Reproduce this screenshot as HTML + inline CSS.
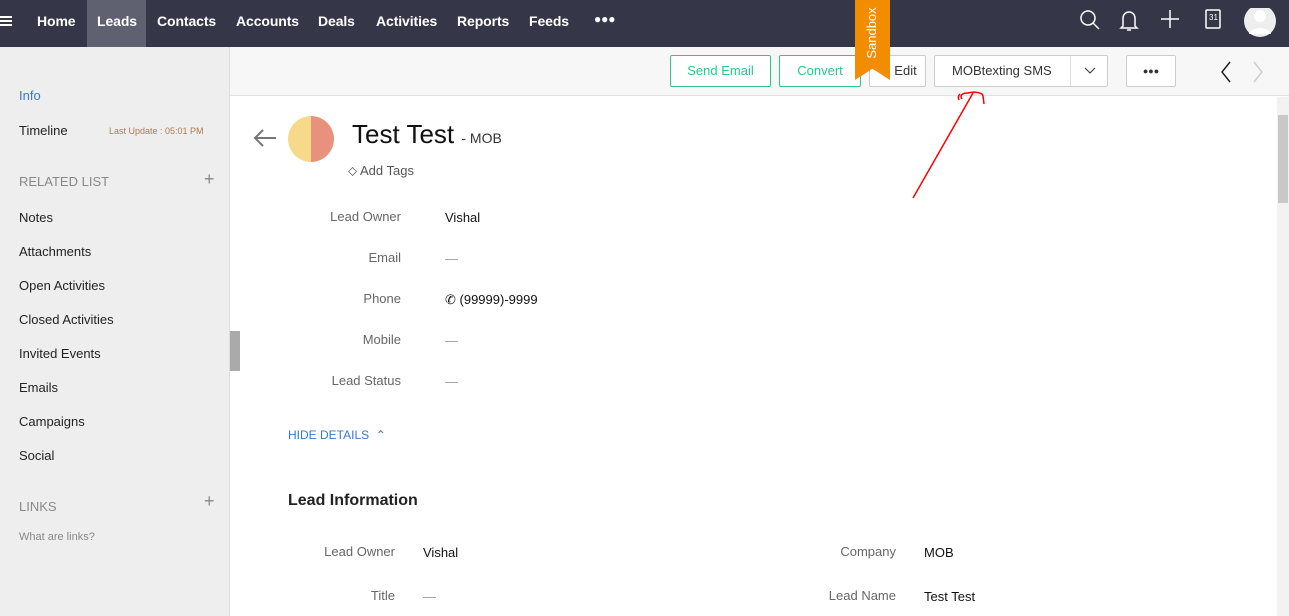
<!DOCTYPE html>
<html><head><meta charset="utf-8"><style>
*{box-sizing:border-box;margin:0;padding:0}
body{width:1289px;height:616px;overflow:hidden;font-family:"Liberation Sans",sans-serif;background:#fff;position:relative}
.top{position:absolute;left:0;top:0;width:1289px;height:47px;background:#363649}
.top a{position:absolute;top:0;height:47px;line-height:43px;color:#fff;font-size:14px;font-weight:bold;letter-spacing:-0.1px}
.side{position:absolute;left:0;top:47px;width:230px;height:569px;background:#eeeeee;border-right:1px solid #ddd}
.side div{position:absolute;left:19px;font-size:13px;color:#222}
.bar{position:absolute;left:230px;top:47px;width:1059px;height:49px;background:#f7f7f7;border-bottom:1px solid #e3e3e3}
.btn{position:absolute;top:55px;height:32px;border:1px solid #ccc;background:#fff;font-size:13px;color:#333;text-align:center;line-height:30px;border-radius:2px}
.g{border-color:#2fc58a;color:#2fc58a}
.lbl{position:absolute;font-size:13px;color:#666;text-align:right}
.val{position:absolute;font-size:13px;color:#111}
</style></head><body>
<div class="top">
<div style="position:absolute;left:0;top:16px;width:12px;height:2px;background:#fff;box-shadow:0 4px 0 #fff,0 8px 0 #fff"></div>
<a style="left:37px">Home</a>
<div style="position:absolute;left:87px;top:0;width:59px;height:47px;background:#5f6070"></div>
<a style="left:97px">Leads</a><a style="left:157px">Contacts</a><a style="left:236px">Accounts</a><a style="left:318px">Deals</a><a style="left:376px">Activities</a><a style="left:457px">Reports</a><a style="left:529px">Feeds</a><a style="left:594px;font-size:12px;line-height:38px">●●●</a>
<svg style="position:absolute;left:1078px;top:8px" width="200" height="32" fill="none" stroke="#fff" stroke-width="1.5">
<circle cx="10" cy="10" r="7"/><path d="M15 15l6 6"/>
<path d="M45 18V10a6 6 0 0112 0v8l2 2H43z M49 22h4"/>
<path d="M92 2v18M83 11h18"/>
<rect x="128" y="2" width="14" height="18" rx="1"/>
<circle cx="182" cy="13" r="16" fill="#eee" stroke="none"/><circle cx="182" cy="8" r="6" fill="#fff" stroke="none"/><path d="M171 26c2-8 20-8 22 0" fill="#fff" stroke="none"/>
</svg>
<span style="position:absolute;left:1209px;top:13px;color:#fff;font-size:8px">31</span>
</div>
<div class="side">
<div style="top:41px;color:#3b76d2">Info</div>
<div style="top:76px">Timeline</div><div style="left:109px;top:79px;font-size:9px;color:#b07a4a">Last Update : 05:01 PM</div>
<div style="top:127px;color:#888">RELATED LIST</div><div style="left:204px;top:122px;font-size:18px;color:#888">+</div>
<div style="top:163px">Notes</div><div style="top:197px">Attachments</div><div style="top:231px">Open Activities</div><div style="top:265px">Closed Activities</div><div style="top:299px">Invited Events</div><div style="top:333px">Emails</div><div style="top:367px">Campaigns</div><div style="top:401px">Social</div>
<div style="top:452px;color:#888">LINKS</div><div style="left:204px;top:444px;font-size:18px;color:#888">+</div>
<div style="top:484px;font-size:11px;color:#888">What are links?</div>
</div>
<div style="position:absolute;left:230px;top:331px;width:10px;height:40px;background:#aaa"></div>
<div class="bar"></div>
<div class="btn g" style="left:670px;width:101px">Send Email</div>
<div class="btn g" style="left:779px;width:82px">Convert</div>
<div class="btn" style="left:869px;width:57px;padding-left:16px">Edit</div>
<div style="position:absolute;left:855px;top:0;width:35px;height:80px;background:#f28c00;clip-path:polygon(0 0,100% 0,100% 100%,50% 86%,0 100%)"></div>
<div style="position:absolute;left:832px;top:24px;width:80px;height:18px;line-height:18px;color:#fff;font-size:13px;transform:rotate(-90deg);text-align:center">Sandbox</div>
<div class="btn" style="left:934px;width:174px;text-align:left;padding-left:17px">MOBtexting SMS<span style="position:absolute;left:135px;top:0;height:30px;border-left:1px solid #ddd;width:38px"><svg style="position:absolute;left:13px;top:11px" width="12" height="8" fill="none" stroke="#333" stroke-width="1"><path d="M1 1l5 5 5-5"/></svg></span></div>
<div class="btn" style="left:1126px;width:50px;font-size:9px">●●●</div>
<svg style="position:absolute;left:1218px;top:60px" width="50" height="24" fill="none" stroke-width="1.5"><path d="M12 2L4 12l8 10" stroke="#222"/><path d="M36 2l8 10-8 10" stroke="#ccc"/></svg>
<svg style="position:absolute;left:900px;top:85px" width="110" height="120" fill="none" stroke="#f00" stroke-width="1.5"><path d="M13 113L73 8M62 14c-2-3-1-6 6-6 7-2 15 0 15 3l1 8M60 9c-2 2-2 4-1 6"/></svg>
<div style="position:absolute;left:1277px;top:97px;width:12px;height:519px;background:#f2f2f2"></div>
<div style="position:absolute;left:1278px;top:115px;width:10px;height:88px;background:#c8c8c8"></div>
<svg style="position:absolute;left:252px;top:128px" width="26" height="20" fill="none" stroke="#777" stroke-width="2"><path d="M24 10H3M11 2L3 10l8 8"/></svg>
<div style="position:absolute;left:288px;top:116px;width:46px;height:46px;border-radius:50%;background:linear-gradient(90deg,#f7d98a 50%,#e8927e 50%)"></div>
<div style="position:absolute;left:352px;top:119px;font-size:26px;color:#111">Test Test <span style="font-size:14px;color:#333">- MOB</span></div>
<div style="position:absolute;left:348px;top:163px;font-size:13px;color:#555">⬦ Add Tags</div>
<div class="lbl" style="left:280px;width:121px;top:209px">Lead Owner</div><div class="val" style="left:445px;top:210px">Vishal</div>
<div class="lbl" style="left:280px;width:121px;top:250px">Email</div><div class="val" style="left:445px;top:251px;color:#999">—</div>
<div class="lbl" style="left:280px;width:121px;top:291px">Phone</div><div class="val" style="left:445px;top:292px">✆ (99999)-9999</div>
<div class="lbl" style="left:280px;width:121px;top:332px">Mobile</div><div class="val" style="left:445px;top:333px;color:#999">—</div>
<div class="lbl" style="left:280px;width:121px;top:373px">Lead Status</div><div class="val" style="left:445px;top:374px;color:#999">—</div>
<div style="position:absolute;left:288px;top:428px;font-size:12px;color:#3b76d2">HIDE DETAILS &nbsp;⌃</div>
<div style="position:absolute;left:288px;top:492px;font-size:16px;font-weight:bold;color:#222">Lead Information</div>
<div class="lbl" style="left:280px;width:115px;top:544px">Lead Owner</div><div class="val" style="left:423px;top:545px">Vishal</div>
<div class="lbl" style="left:280px;width:115px;top:588px">Title</div><div class="val" style="left:423px;top:589px;color:#999">—</div>
<div class="lbl" style="left:780px;width:116px;top:544px">Company</div><div class="val" style="left:924px;top:545px">MOB</div>
<div class="lbl" style="left:780px;width:116px;top:588px">Lead Name</div><div class="val" style="left:924px;top:589px">Test Test</div>
</body></html>
